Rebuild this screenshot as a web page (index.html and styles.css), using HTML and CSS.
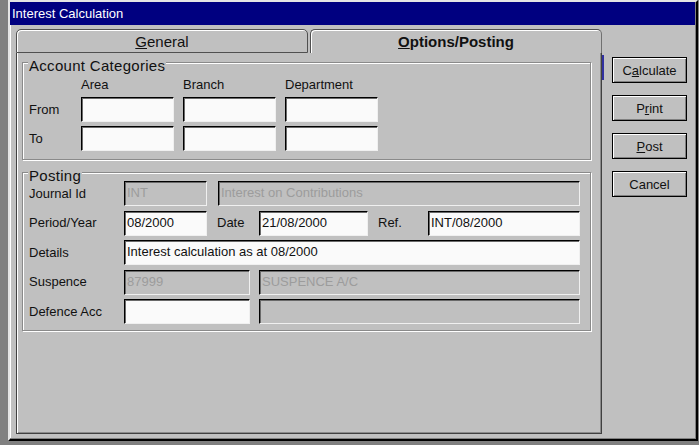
FILE: index.html
```html
<!DOCTYPE html>
<html>
<head>
<meta charset="utf-8">
<title>Interest Calculation</title>
<link rel="stylesheet" href="styles.css">
</head>
<body>
<div class="desktop">
  <div class="window">
    <div class="titlebar">Interest Calculation</div>
    <div class="client">
      <div class="tabctl">
        <div class="tabs">
          <div class="tab general"><span><u>G</u>eneral</span></div>
          <div class="tab active"><span><u>O</u>ptions/Posting</span></div>
        </div>
        <div class="panel">
          <div class="group acct">
            <div class="group-title">Account Categories</div>
            <div class="acct-grid">
              <span></span>
              <span class="lbl">Area</span>
              <span class="lbl">Branch</span>
              <span class="lbl">Department</span>
              <span class="lbl">From</span>
              <div class="field"></div>
              <div class="field"></div>
              <div class="field"></div>
              <span class="lbl">To</span>
              <div class="field"></div>
              <div class="field"></div>
              <div class="field"></div>
            </div>
          </div>
          <div class="group posting">
            <div class="group-title">Posting</div>
            <div class="rows">
              <div class="row">
                <span class="lbl lcol">Journal Id</span>
                <div class="field dis w83">INT</div>
                <div class="field dis grow ml11">Interest on Contributions</div>
              </div>
              <div class="row">
                <span class="lbl lcol">Period/Year</span>
                <div class="field w83">08/2000</div>
                <span class="lbl date-lbl">Date</span>
                <div class="field w109">21/08/2000</div>
                <span class="lbl ref-lbl">Ref.</span>
                <div class="field grow">INT/08/2000</div>
              </div>
              <div class="row">
                <span class="lbl lcol">Details</span>
                <div class="field grow">Interest calculation as at 08/2000</div>
              </div>
              <div class="row">
                <span class="lbl lcol">Suspence</span>
                <div class="field dis w126">87999</div>
                <div class="field dis grow ml9">SUSPENCE A/C</div>
              </div>
              <div class="row">
                <span class="lbl lcol">Defence Acc</span>
                <div class="field w126"></div>
                <div class="field dis grow ml9"></div>
              </div>
            </div>
          </div>
        </div>
      </div>
      <div class="sbar"></div>
      <div class="buttons">
        <div class="btn">C<u>a</u>lculate</div>
        <div class="btn">P<u>r</u>int</div>
        <div class="btn"><u>P</u>ost</div>
        <div class="btn">Cancel</div>
      </div>
    </div>
  </div>
</div>
</body>
</html>
```
FILE: styles.css
```css
* { box-sizing: border-box; }
html, body { margin: 0; padding: 0; }
body {
  background: #808080;
  font-family: "Liberation Sans", Arial, sans-serif;
  font-size: 13px;
  color: #111;
}
.desktop {
  width: 699px;
  height: 445px;
  padding-left: 8px;
  overflow: hidden;
}
.window {
  width: 690px;
  height: 441px;
  background: #c0c0c0;
  border: 2px solid;
  border-color: #e4e4e4 #000 #000 #e4e4e4;
  box-shadow: inset -1px -1px 0 #808080, inset 1px 1px 0 #fff;
  display: flex;
  flex-direction: column;
}
.titlebar {
  height: 23px;
  margin-right: 1px;
  background: #000080;
  color: #fff;
  line-height: 23px;
  padding-left: 2px;
  font-size: 13px;
}
.client {
  flex: 1;
  display: flex;
  padding: 4px 0 0 6px;
}
.tabctl {
  width: 586px;
  height: 405px;
  display: flex;
  flex-direction: column;
}
.tabs {
  display: flex;
  height: 24px;
}
.tab {
  height: 24px;
  display: flex;
  align-items: center;
  justify-content: center;
  font-size: 15px;
  background: #c0c0c0;
  border: 1px solid #505050;
  border-radius: 5px 5px 0 0;
  box-shadow: inset 1px 1px 0 #fff;
}
.tab.general { width: 292px; }
.tab.active {
  width: 292px;
  margin-left: 2px;
  border-bottom: none;
  font-weight: bold;
  border-right-color: #707070;
}
.panel {
  flex: 1;
  border: 1px solid #404040;
  border-top: none;
  box-shadow: inset 1px 0 0 #fff, inset -1px -1px 0 #8a8a8a;
  padding: 9px 10px 0 5px;
}
.group {
  border: 1px solid #8a8a8a;
  box-shadow: inset 1px 1px 0 #fff, 1px 1px 0 #fff;
  padding: 0 10px 0 6px;
}
.group.acct { height: 98px; }
.group.posting { height: 159px; margin-top: 12px; }
.group-title {
  width: max-content;
  font-size: 15px;
  line-height: 16px;
  letter-spacing: 0.3px;
  margin-top: -5px;
  margin-left: -1px;
  padding: 0 1px;
  background: #c0c0c0;
}
.acct-grid {
  margin-top: 3px;
  display: grid;
  grid-template-columns: 43px 93px 93px 93px;
  grid-template-rows: 16px 25px 25px;
  column-gap: 9px;
  row-gap: 4px;
  align-items: center;
}
.lbl { line-height: 16px; white-space: nowrap; }
.field {
  height: 25px;
  background: #fafafa;
  border-style: solid;
  border-width: 1px;
  border-color: #000 #f0f0f0 #f0f0f0 #000;
  box-shadow: inset 1px 1px 0 #6a6a6a;
  padding-left: 2px;
  line-height: 22px;
  white-space: nowrap;
  overflow: hidden;
  font-size: 13px;
  color: #111;
}
.field.dis { background: #c0c0c0; color: #9c9c9c; }
.rows {
  margin-top: -3px;
  display: flex;
  flex-direction: column;
  gap: 4.5px;
}
.row {
  display: flex;
  align-items: center;
  height: 25px;
}
.lcol { width: 95px; flex: none; }
.w83 { width: 83px; flex: none; }
.w109 { width: 109px; flex: none; }
.w126 { width: 126px; flex: none; }
.grow { flex: 1; }
.ml11 { margin-left: 11px; }
.ml9 { margin-left: 9px; }
.date-lbl { width: 42px; margin-left: 10px; flex: none; }
.ref-lbl { width: 50px; margin-left: 10px; flex: none; }
.sbar {
  width: 2px;
  height: 25px;
  margin-top: 26px;
  background: #3030a0;
  flex: none;
}
.buttons {
  display: flex;
  flex-direction: column;
  gap: 12px;
  margin-left: 8px;
  padding-top: 28px;
}
.btn {
  width: 75px;
  height: 26px;
  border: 1px solid #000;
  background: #c0c0c0;
  box-shadow: inset 1px 1px 0 #fff, inset -1px -1px 0 #808080;
  display: flex;
  align-items: center;
  justify-content: center;
  font-size: 13px;
}
```
